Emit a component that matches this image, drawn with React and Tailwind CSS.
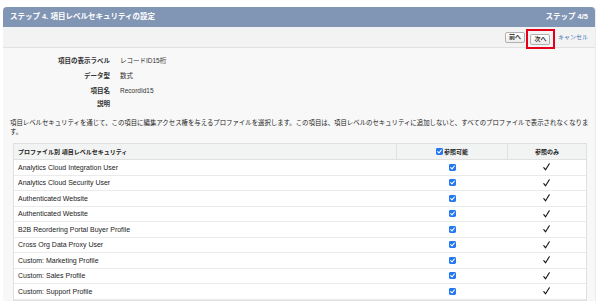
import React from 'react'

const PROFILES = [
  'Analytics Cloud Integration User',
  'Analytics Cloud Security User',
  'Authenticated Website',
  'Authenticated Website',
  'B2B Reordering Portal Buyer Profile',
  'Cross Org Data Proxy User',
  'Custom: Marketing Profile',
  'Custom: Sales Profile',
  'Custom: Support Profile',
]

const DETAILS = [
  { label: '項目の表示ラベル', value: 'レコードID15桁', h: 'h-[15px]' },
  { label: 'データ型', value: '数式', h: 'h-[15px]' },
  { label: '項目名', value: 'RecordId15', h: 'h-[15px]' },
  { label: '説明', value: '', h: 'h-[11px]' },
]

function BlueBox() {
  return (
    <svg width="7" height="7" viewBox="0 0 7 7" className="block">
      <rect x="0" y="0" width="7" height="7" rx="1.4" fill="#2478f2" />
      <path d="M1.7 3.6 L3 4.9 L5.4 2" fill="none" stroke="#fff" strokeWidth="1.1" strokeLinecap="round" strokeLinejoin="round" />
    </svg>
  )
}

function Tick() {
  return (
    <svg width="7" height="8" viewBox="0 0 7 8" className="block">
      <path d="M0.8 4.6 L2.6 6.8 L6.3 0.8" fill="none" stroke="#111" strokeWidth="1.1" strokeLinecap="round" strokeLinejoin="round" />
    </svg>
  )
}

function Btn({ children }) {
  return (
    <div className="h-[11px] px-[3px] flex items-center rounded-[2px] border border-[#b0b0b0] bg-gradient-to-b from-white to-[#ececec] text-[6px] font-bold text-[#333] leading-none">
      {children}
    </div>
  )
}

export default function App() {
  return (
    <div className="w-[602px] h-[301px] overflow-hidden bg-white pt-[7px] pl-[3px] pr-[6px] font-['Liberation_Sans','Noto_Sans_CJK_JP',sans-serif]">
      <div className="h-full bg-[#f8f8f8] border-r border-[#ececec] rounded-t-[4px]">

        {/* step header */}
        <div className="h-[20px] bg-[#8195b4] rounded-t-[4px] flex items-center justify-between px-[7px] text-white font-bold text-[7.5px] leading-none">
          <span>ステップ 4. 項目レベルセキュリティの設定</span>
          <span>ステップ 4/5</span>
        </div>

        {/* buttons */}
        <div className="h-[21px] bg-[#f3f3f3] border-b border-[#e1e1e1] flex items-start justify-end pr-[7px]">
          <div className="h-full flex items-center"><Btn>前へ</Btn></div>
          <div className="relative z-10 ml-[1px] mt-[2px] w-[29px] h-[20px] border-2 border-[#e5001a] flex items-center justify-center">
            <Btn>次へ</Btn>
          </div>
          <div className="h-full flex items-center ml-[3px] text-[6px] text-[#3d74b8] leading-none">キャンセル</div>
        </div>

        {/* field details */}
        <div className="pt-[6px]">
          {DETAILS.map((d) => (
            <div key={d.label} className={`${d.h} flex items-center text-[6.5px] leading-none`}>
              <div className="w-[107px] text-right font-bold text-[#333]">{d.label}</div>
              <div className="ml-[10px] text-[#333]">{d.value}</div>
            </div>
          ))}
        </div>

        {/* description */}
        <p className="mt-[8px] ml-[7px] w-[580px] text-[6.4px] leading-[9px] text-[#222] whitespace-nowrap font-['Noto_Sans_CJK_JP',sans-serif]">
          項目レベルセキュリティを通じて、この項目に編集アクセス権を与えるプロファイルを選択します。この項目は、項目レベルのセキュリティに追加しないと、すべてのプロファイルで表示されなくなりま
          <br />
          す。
        </p>

        {/* profile table */}
        <div className="mt-[7px] ml-[10px] w-[574px] border border-[#e0e0e0] bg-white">
          <div className="h-[16px] flex bg-[#f2f3f3] border-b border-[#e0e0e0] text-[6px] font-bold text-[#222] leading-none">
            <div className="w-[382px] flex items-center pl-[4px]">プロファイル別 項目レベルセキュリティ</div>
            <div className="w-[111px] border-l border-[#e0e0e0] flex items-center justify-center gap-[1px]">
              <BlueBox />
              <span className="mt-[1px]">参照可能</span>
            </div>
            <div className="flex-1 border-l border-[#e0e0e0] flex items-center justify-center">参照のみ</div>
          </div>
          {PROFILES.map((p, i) => (
            <div key={i} className="h-[15.5px] flex border-b border-[#ebebeb] text-[7px] text-[#222] leading-none">
              <div className="w-[382px] flex items-center pl-[4px]">{p}</div>
              <div className="w-[111px] flex items-center justify-center pl-[1px]"><BlueBox /></div>
              <div className="flex-1 flex items-center justify-center"><Tick /></div>
            </div>
          ))}
        </div>

      </div>
    </div>
  )
}
